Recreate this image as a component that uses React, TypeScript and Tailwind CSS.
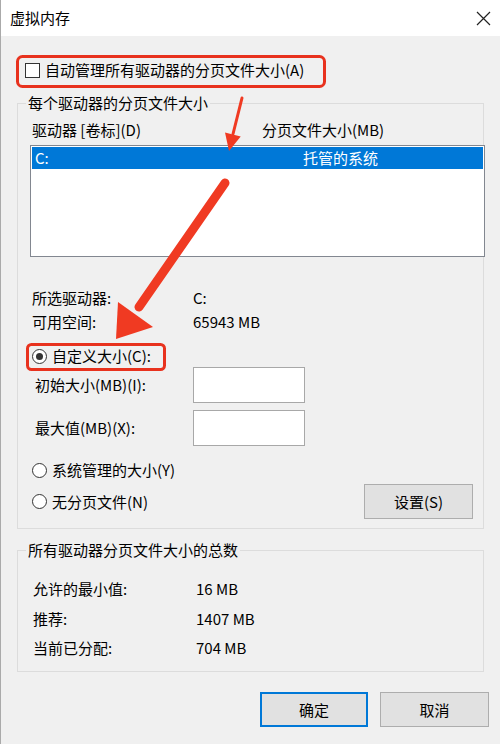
import React from 'react';

const Radio = ({ checked = false }: { checked?: boolean }) => (
  <span className="w-[15px] h-[15px] rounded-full border border-[#333333] bg-white flex items-center justify-center shrink-0">
    {checked && <span className="w-[7px] h-[7px] rounded-full bg-[#333333]" />}
  </span>
);

const TextBox = () => <div className="w-[112px] h-[36px] bg-white border border-[#a8a8a8]" />;

// red annotation marks drawn over the dialog
const Annotations = () => (
  <svg className="absolute inset-0 pointer-events-none" width="500" height="744" viewBox="0 0 500 744">
    <rect x="16.5" y="56.5" width="307" height="30" rx="5" fill="none" stroke="#e8321e" strokeWidth="3" />
    <rect x="26.5" y="344.5" width="137" height="25" rx="4" fill="none" stroke="#e8321e" strokeWidth="3" />
    <line x1="241" y1="98" x2="232" y2="134" stroke="#f03a22" strokeWidth="3" strokeLinecap="round" />
    <polygon points="224,132.6 239.7,136.4 228,151" fill="#f03a22" />
    <line x1="224" y1="183" x2="138" y2="307" stroke="#f03a22" strokeWidth="9" strokeLinecap="round" />
    <polygon points="117,302 152,327 115,339" fill="#f03a22" />
  </svg>
);

export default function App() {
  return (
    <div className="relative w-[500px] h-[744px] bg-[#f0f0f0] border-l border-[#aaaaaa] text-[15px] leading-[20px] text-black font-['Noto_Sans_CJK_SC',sans-serif] overflow-hidden">
      {/* Title bar */}
      <div className="h-[36px] bg-white flex items-center justify-between pl-[9px] pr-[9px]">
        <span className="text-[15px]">虚拟内存</span>
        <svg width="15" height="15" viewBox="0 0 15 15">
          <path d="M1 1 L14 14 M14 1 L1 14" stroke="#222222" strokeWidth="1.2" />
        </svg>
      </div>

      <div className="pl-[16px] pr-[16px]">
        {/* Auto manage checkbox */}
        <div className="mt-[22px] h-[24px] pl-[8px] flex items-center gap-[5px]">
          <span className="w-[15px] h-[15px] border border-[#333333] bg-white shrink-0" />
          <span>自动管理所有驱动器的分页文件大小(A)</span>
        </div>

        {/* Per-drive group */}
        <fieldset className="mt-[11px] border border-[#dcdcdc] pb-[9px]">
          <legend className="ml-[8px] px-[2px] leading-[20px]">每个驱动器的分页文件大小</legend>
          <div className="pl-[12px]">
            <div className="mt-[7px] h-[20px] pl-[2px] flex">
              <span className="w-[230px]">驱动器 [卷标](D)</span>
              <span>分页文件大小(MB)</span>
            </div>

            <div className="mt-[5px] h-[112px] -mr-[2px] border border-[#828790] bg-white p-[1px]">
              <div className="h-[22px] bg-[#0078d7] text-white flex items-center pl-[3px]">
                <span className="w-[268px]">C:</span>
                <span>托管的系统</span>
              </div>
            </div>

            <div className="mt-[31px] grid grid-cols-[161px_1fr] gap-y-[4px] pl-[2px]">
              <span>所选驱动器:</span>
              <span>C:</span>
              <span>可用空间:</span>
              <span>65943 MB</span>
            </div>

            <div className="mt-[13px] h-[22px] pl-[2px] flex items-center gap-[5px]">
              <Radio checked />
              <span>自定义大小(C):</span>
            </div>

            <div className="h-[36px] flex items-center">
              <span className="w-[163px] pl-[5px]">初始大小(MB)(I):</span>
              <TextBox />
            </div>
            <div className="mt-[7px] h-[36px] flex items-center">
              <span className="w-[163px] pl-[5px]">最大值(MB)(X):</span>
              <TextBox />
            </div>

            <div className="mt-[13px] h-[22px] pl-[2px] flex items-center gap-[5px]">
              <Radio />
              <span>系统管理的大小(Y)</span>
            </div>

            <div className="mt-[3px] h-[35px] pl-[2px] pr-[10px] flex items-center justify-between">
              <div className="flex items-center gap-[5px]">
                <Radio />
                <span>无分页文件(N)</span>
              </div>
              <button className="w-[109px] h-[35px] bg-[#e1e1e1] border border-[#adadad]">设置(S)</button>
            </div>
          </div>
        </fieldset>

        {/* Totals group */}
        <fieldset className="mt-[11px] border border-[#dcdcdc] pb-[13px]">
          <legend className="ml-[8px] px-[2px] leading-[20px]">所有驱动器分页文件大小的总数</legend>
          <div className="mt-[19px] pl-[15px] grid grid-cols-[163px_1fr] auto-rows-[20px] gap-y-[9.5px]">
            <span>允许的最小值:</span>
            <span>16 MB</span>
            <span>推荐:</span>
            <span>1407 MB</span>
            <span>当前已分配:</span>
            <span>704 MB</span>
          </div>
        </fieldset>
      </div>

      {/* Dialog buttons */}
      <div className="mt-[20px] pr-[11px] flex justify-end gap-[12px]">
        <button className="w-[108px] h-[35px] bg-[#e1e1e1] border-2 border-[#0078d7]">确定</button>
        <button className="w-[109px] h-[35px] bg-[#e1e1e1] border border-[#adadad]">取消</button>
      </div>

      <Annotations />
    </div>
  );
}
